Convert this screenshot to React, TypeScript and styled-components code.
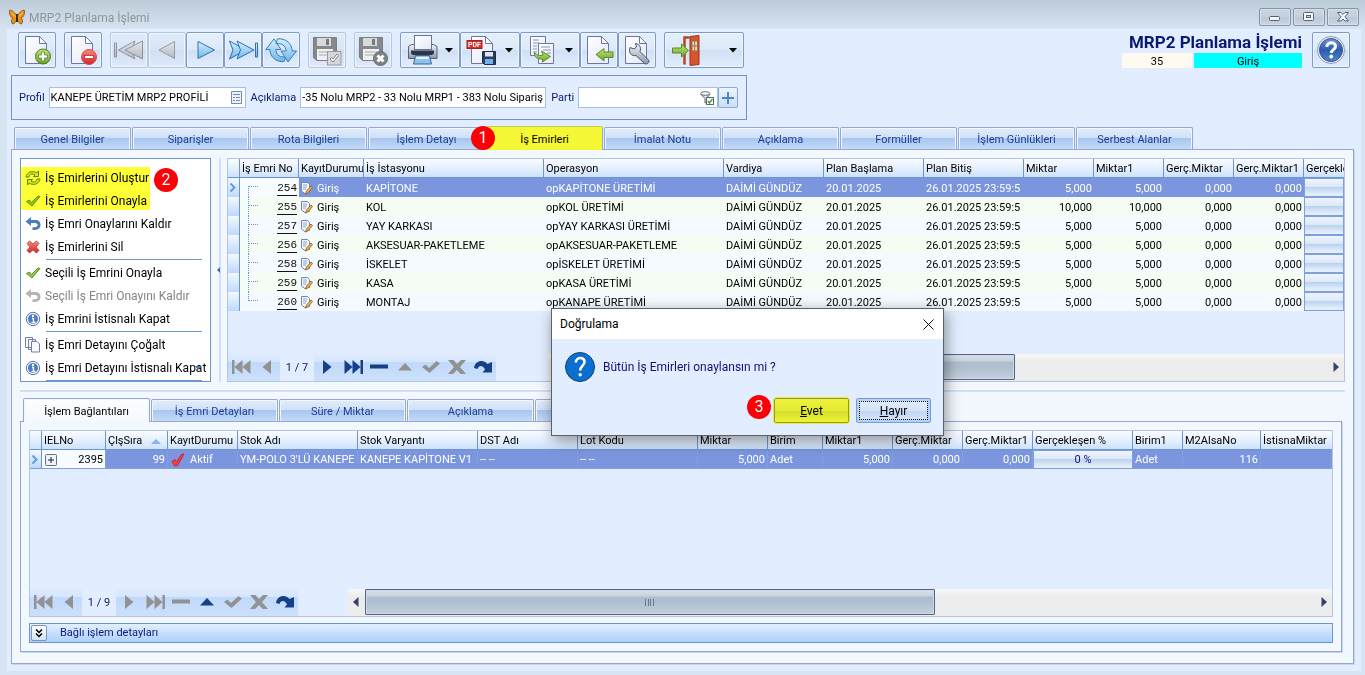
import React from 'react';
import styled, { createGlobalStyle, css } from 'styled-components';

const ui = '"Segoe UI", Roboto, "Noto Sans", sans-serif';
const tahoma = 'Tahoma, Roboto, "Noto Sans", sans-serif';

const Global = createGlobalStyle`
  *, *::before, *::after { box-sizing: border-box; }
  body { margin: 0; background: #d7e4f1; font: 11px/14px ${tahoma}; color: #000; }
  button, input { font: inherit; color: inherit; margin: 0; padding: 0; }
  svg { display: block; flex: none; }
`;

/* ---------- window frame ---------- */

const Window = styled.div`
  display: flex;
  flex-direction: column;
  min-height: 100vh;
  position: relative;
  overflow: hidden;
`;

const TitleBar = styled.header`
  display: flex;
  align-items: center;
  gap: 4px;
  height: 29px;
  padding: 5px 6px 0 9px;
  background: linear-gradient(#bdccd9, #d6e3f0);
  font: 12px/16px ${ui};
  color: #8e959d;
`;

const TitleText = styled.h1`
  flex: 1;
  margin: 0;
  padding-top: 2px;
  font: inherit;
`;

const CaptionButtons = styled.div`
  display: flex;
  gap: 2px;
`;

const CaptionButton = styled.button`
  display: flex;
  align-items: center;
  justify-content: center;
  width: 32px;
  height: 18px;
  border: 1px solid #8794a8;
  border-radius: 2px;
  background: linear-gradient(#cad6e2, #c3d0dd 50%, #b9c7d6 50%, #c9d6e3);
  box-shadow: inset 0 0 0 1px #d5e0ea;
`;

const Client = styled.main`
  flex: 1;
  display: flex;
  flex-direction: column;
  margin: 0 4px 4px 7px;
  padding: 3px 7px 7px 4px;
  background: #e2eeff;
`;

/* ---------- toolbar ---------- */

const Toolbar = styled.div`
  display: flex;
  justify-content: space-between;
  gap: 8px;
`;

const ToolGroups = styled.div`
  display: flex;
  gap: 8px;
  padding-left: 7px;
`;

const ToolGroup = styled.div`
  display: flex;
`;

const ToolButton = styled.button<{ $wide?: 'menu' | 'exit' }>`
  display: flex;
  align-items: center;
  justify-content: ${p => (p.$wide ? 'space-between' : 'center')};
  width: ${p => (p.$wide === 'exit' ? 80 : p.$wide ? 60 : 38)}px;
  height: 36px;
  padding: 0 ${p => (p.$wide ? 6 : 0)}px 0 ${p => (p.$wide ? 5 : 0)}px;
  border: 1px solid #7f9bc9;
  border-radius: 2px;
  background: linear-gradient(#e6f0fb, #dce9f8 50%, #cfe0f5 50%, #e2eefc);
  box-shadow: inset 0 0 0 1px #eef5fd;
  &:disabled {
    border-color: #b4c8e2;
    background: linear-gradient(#e0ebf9, #d8e5f6 50%, #d0dff3 50%, #dfeafa);
  }
`;

const Summary = styled.div`
  display: flex;
  gap: 10px;
  padding-right: 4px;
`;

const SummaryText = styled.div`
  display: flex;
  flex-direction: column;
  align-items: flex-end;
  width: 180px;
`;

const SummaryTitle = styled.h2`
  margin: 0;
  font: bold 17px/21px ${ui};
  color: #0a1a72;
  white-space: nowrap;
`;

const SummaryFields = styled.div`
  display: flex;
  gap: 2px;
`;

const SummaryField = styled.output<{ $accent?: boolean }>`
  width: ${p => (p.$accent ? 108 : 70)}px;
  height: 15px;
  line-height: 17px;
  text-align: center;
  background: ${p => (p.$accent ? '#00ffff' : '#fffaf0')};
`;

/* ---------- profile strip ---------- */

const ProfileStrip = styled.section`
  display: flex;
  align-items: center;
  align-self: flex-start;
  gap: 5px;
  width: 736px;
  max-width: 100%;
  height: 45px;
  margin-top: 7px;
  padding: 0 8px 0 7px;
  border: 1px solid #6b95d3;
  color: #0a1a72;
`;

const Field = styled.label<{ $fill?: boolean }>`
  display: flex;
  align-items: center;
  gap: 4px;
  flex: ${p => (p.$fill ? '1 1 0' : 'none')};
`;

const FieldBox = styled.span<{ $width?: number }>`
  display: flex;
  align-items: center;
  ${p => (p.$width ? `width: ${p.$width}px;` : 'flex: 1;')}
  height: 21px;
  padding-left: 1px;
  border: 1px solid #a9c0e0;
  background: #fff;
  color: #000;
  & > svg { margin-right: 3px; }
`;

const FieldInput = styled.input`
  flex: 1;
  width: 0;
  min-width: 0;
  border: 0;
  outline: 0;
  background: transparent;
`;

const AddButton = styled.button`
  display: flex;
  align-items: center;
  justify-content: center;
  width: 20px;
  height: 21px;
  margin-left: -5px;
  border: 1px solid #8fa9d1;
  border-radius: 2px;
  background: linear-gradient(#edf4fd, #cbddf4);
`;

/* ---------- tabs ---------- */

const TabRow = styled.nav<{ $top?: number }>`
  display: flex;
  align-items: flex-end;
  gap: 1px;
  height: 23px;
  margin: ${p => p.$top ?? 0}px 0 0 3px;
`;

const Tab = styled.button<{ $active?: boolean; $marked?: boolean; $width: number }>`
  flex: 0 1 ${p => p.$width}px;
  height: 22px;
  padding-top: 2px;
  border: 1px solid #93a9d0;
  border-bottom: 0;
  border-radius: 2px 2px 0 0;
  color: #1c3f94;
  background: linear-gradient(#e2edfb, #cfe0f7 46%, #a8c6f0 50%, #c4dbf8);
  box-shadow: inset 1px 1px 0 #eff6ff, inset -1px 0 0 #eff6ff;
  white-space: nowrap;
  ${p =>
    p.$active &&
    css`
      height: 24px;
      margin-bottom: -1px;
      position: relative;
      z-index: 1;
      color: #000;
      background: ${p.$marked ? '#f5f835' : 'linear-gradient(#fdfeff, #f3f8ff)'};
      ${p.$marked && 'box-shadow: none; border-left-color: #f5f835; border-top-color: #c5cb4c;'}
    `}
`;

const Page = styled.section<{ $nested?: boolean }>`
  flex: 1;
  display: flex;
  flex-direction: column;
  ${p => p.$nested && 'margin: 0 3px 3px 0;'}
  border: 1px solid #93a9d0;
  background: #f3f8ff;
  padding: 8px;
  box-shadow: 1px 1px 0 #c7d6ec;
`;

/* ---------- command menu ---------- */

const UpperPane = styled.div`
  display: flex;
  height: 224px;
`;

const Menu = styled.aside`
  flex: none;
  position: relative;
  width: 191px;
  padding: 7px 8px 0 4px;
  border: 1px solid #6b95d3;
  background: #fff;
  overflow: hidden;
`;

const MenuItem = styled.button`
  display: flex;
  align-items: center;
  gap: 4px;
  width: 100%;
  height: 23px;
  border: 0;
  background: none;
  font: 12px/16px ${ui};
  white-space: nowrap;
  &:disabled { color: #848484; }
`;

const MenuRule = styled.hr`
  height: 1px;
  margin: 1px 0 1px 21px;
  border: 0;
  background: #6b95d3;
`;

const Marker = styled.span`
  position: absolute;
  left: 0;
  top: 8px;
  width: 129px;
  height: 43px;
  background: #ffff36;
  mix-blend-mode: multiply;
  pointer-events: none;
`;

const MoreMark = styled.span`
  position: absolute;
  right: 9px;
  bottom: 11px;
  border: 3px solid transparent;
  border-bottom: 0;
  border-top: 4px solid #4a7ebb;
`;

const Badge = styled.span<{ $x: number; $y: number }>`
  position: absolute;
  z-index: 5;
  left: ${p => p.$x}px;
  top: ${p => p.$y}px;
  width: 24px;
  height: 24px;
  border-radius: 50%;
  background: #fb0007;
  color: #fff;
  font: 16px/24px ${ui};
  text-align: center;
`;

const Splitter = styled.div<{ $vertical?: boolean }>`
  flex: none;
  display: flex;
  align-items: center;
  ${p =>
    p.$vertical
      ? 'width: 16px; padding-left: 5px; background: linear-gradient(90deg, transparent 8px, #cfe2fb 8px, #cfe2fb 10px, transparent 10px);'
      : 'height: 16px; background: linear-gradient(transparent 7px, #fff 7px, #fff 8px, #bfdaff 8px, #d5e6fd 10px, transparent 10px);'}
`;

/* ---------- data grids ---------- */

const GridPanel = styled.div`
  flex: 1;
  min-width: 0;
  display: flex;
  flex-direction: column;
  border: 1px solid #b1c6e2;
  background: #e2eeff;
`;

const GridBody = styled.div`
  flex: 1;
  overflow: hidden;
`;

const Table = styled.table`
  table-layout: fixed;
  width: 100%;
  border-collapse: separate;
  border-spacing: 0;
`;

const Head = styled.th`
  height: 19px;
  padding: 2px 0 0 2px;
  overflow: hidden;
  white-space: nowrap;
  text-align: left;
  font-weight: normal;
  border-right: 1px solid #6b95d3;
  border-bottom: 1px solid #6b95d3;
  background: linear-gradient(#f9fcff, #e3effe 55%, #cde1fb);
  &:last-child { border-right: 0; }
`;

const SortHead = styled.span`
  display: flex;
  align-items: center;
  justify-content: space-between;
  padding-right: 6px;
`;

const Row = styled.tr<{ $selected?: boolean; $lined?: boolean }>`
  background: #f4faff;
  &:nth-child(even) { background: #f4fcf4; }
  ${p => p.$selected && 'background: #7b96de; color: #fff;'}
  ${p => p.$lined && '& > td { border-right: 1px solid #7fa0dc; border-bottom: 1px solid #7fa0dc; }'}
`;

const Cell = styled.td<{ $right?: boolean; $plain?: boolean }>`
  height: 19px;
  padding: 2px ${p => (p.$right ? 2 : 0)}px 0 2px;
  line-height: 16px;
  overflow: hidden;
  white-space: nowrap;
  text-align: ${p => (p.$right ? 'right' : 'left')};
  ${p => p.$plain && 'background: #f8fcff; color: #000;'}
`;

const IndicatorCell = styled(Cell)`
  && { border-right: 1px solid #6b95d3; }
  padding: 0 0 0 1px;
  background: linear-gradient(#f3f9ff, #bfd9fb);
`;

const OrderCell = styled(Cell)`
  padding: 0 2px;
`;

const Inline = styled.span<{ $between?: boolean }>`
  display: flex;
  align-items: center;
  gap: 4px;
  ${p => p.$between && 'justify-content: space-between;'}
`;

const OrderNo = styled.a`
  padding-top: 2px;
  font: 11px/13px "Liberation Mono", monospace;
  color: #111;
  text-decoration: none;
  border-bottom: 1px solid #111;
`;

const ProgressCell = styled.td`
  height: 19px;
  padding: 0;
  text-align: center;
  color: #10107a;
  border: 1px solid #7fa0dc;
  background: linear-gradient(#eef4fd, #dde9f8 45%, #bcd3f0 50%, #e3eefb 90%);
`;

const GridFooter = styled.div`
  display: flex;
  align-items: stretch;
  justify-content: space-between;
  height: 27px;
`;

const NavBar = styled.div`
  flex: none;
  display: flex;
`;

const NavStrip = styled.div`
  display: flex;
  background: linear-gradient(#deebfd, #d5e6fd 8px, #c0d9fb 8px, #cce0fb);
`;

const NavButton = styled.button`
  display: flex;
  align-items: center;
  justify-content: center;
  width: 26px;
  padding-bottom: 1px;
  border: 0;
  background: none;
  color: #163f87;
  &:disabled { color: #929292; }
`;

const NavCount = styled.span`
  width: 34px;
  line-height: 28px;
  text-align: center;
  color: #0a1a72;
`;

const ScrollBar = styled.div<{ $width: string }>`
  display: flex;
  align-items: flex-start;
  width: ${p => p.$width};
  background: linear-gradient(#f7f7f7, #ececec 30%, #ededed);
`;

const ScrollArrow = styled.button`
  display: flex;
  align-items: center;
  justify-content: center;
  width: 17px;
  height: 26px;
  border: 0;
  background: none;
`;

const ScrollTrack = styled.div`
  flex: 1;
  height: 26px;
`;

const ScrollThumb = styled.div<{ $size: string }>`
  display: flex;
  align-items: center;
  justify-content: center;
  width: ${p => p.$size};
  height: 26px;
  border: 1px solid #54658f;
  border-radius: 1px;
  background: linear-gradient(#dbe2ea, #c6d1dd 26%, #adbdce 30%, #b3c1d1 60%, #c5d0dc);
  box-shadow: inset 0 0 0 1px #d0d9e3;
`;

const DetailBar = styled.div`
  display: flex;
  align-items: center;
  gap: 13px;
  height: 20px;
  margin-top: 6px;
  padding: 0 1px;
  border: 1px solid #6b95d3;
  background: linear-gradient(#e3effe, #acd0fc);
  line-height: 16px;
  color: #0a1a72;
`;

const ExpandButton = styled.button`
  display: flex;
  align-items: center;
  justify-content: center;
  width: 16px;
  height: 16px;
  border: 1px solid #7b93bd;
  border-radius: 2px;
  background: linear-gradient(#fff, #d3e3f8);
`;

/* ---------- dialog ---------- */

const Dialog = styled.section`
  position: absolute;
  z-index: 4;
  left: 551px;
  top: 308px;
  width: 393px;
  border: 1px solid #5c6169;
  background: #e2eeff;
  box-shadow: 2px 4px 14px rgba(0, 0, 0, 0.42);
`;

const DialogTitle = styled.header`
  display: flex;
  align-items: center;
  justify-content: space-between;
  height: 30px;
  padding: 0 9px 0 8px;
  background: #fff;
  font: 12px/16px ${ui};
`;

const DialogClose = styled.button`
  display: flex;
  justify-content: flex-end;
  width: 14px;
  border: 0;
  background: none;
`;

const DialogBody = styled.div`
  display: flex;
  align-items: center;
  gap: 8px;
  height: 56px;
  padding: 0 13px;
  font: 12px/16px ${ui};
  color: #10107a;
`;

const DialogButtons = styled.div`
  display: flex;
  justify-content: flex-end;
  gap: 7px;
  height: 40px;
  padding: 3px 12px 12px;
`;

const DialogButton = styled.button<{ $marked?: boolean }>`
  width: 75px;
  border: 1px solid ${p => (p.$marked ? '#8f9b3a' : '#7c9bcb')};
  border-radius: 2px;
  font: 12px/16px ${ui};
  background: ${p =>
    p.$marked
      ? 'linear-gradient(#eef23a, #e6ea33 50%, #d2d92c 50%, #eef535)'
      : 'linear-gradient(#e4effc, #d3e3f8 50%, #bed5f3 50%, #d8e8fc)'};
  ${p =>
    p.$marked
      ? 'outline: 1px solid #e8ec30;'
      : 'outline: 1px dotted #111; outline-offset: -4px; box-shadow: inset 0 0 0 2px #b3d2f7;'}
`;

/* ---------- drawings ---------- */

const SharedGradients = () => (
  <svg width="0" height="0" style={{ position: 'absolute' }} aria-hidden="true">
    <defs>
      <linearGradient id="paper" x1="0" y1="0" x2="1" y2="1"><stop offset="0" stopColor="#fff" /><stop offset="1" stopColor="#e4e9f6" /></linearGradient>
      <linearGradient id="sky" x1="0" y1="0" x2="0" y2="1"><stop offset="0" stopColor="#d9f0fd" /><stop offset="1" stopColor="#6db6ea" /></linearGradient>
      <linearGradient id="silver" x1="0" y1="0" x2="0" y2="1"><stop offset="0" stopColor="#e6e8eb" /><stop offset="1" stopColor="#b4b9bf" /></linearGradient>
      <linearGradient id="leaf" x1="0" y1="0" x2="0" y2="1"><stop offset="0" stopColor="#c0e67c" /><stop offset="1" stopColor="#6ea32b" /></linearGradient>
      <linearGradient id="red" x1="0" y1="0" x2="0" y2="1"><stop offset="0" stopColor="#f78a84" /><stop offset="1" stopColor="#d2232a" /></linearGradient>
      <linearGradient id="steel" x1="0" y1="0" x2="0" y2="1"><stop offset="0" stopColor="#f2f3f6" /><stop offset="1" stopColor="#8d97ab" /></linearGradient>
      <linearGradient id="royal" x1="0" y1="0" x2="0" y2="1"><stop offset="0" stopColor="#6b95d8" /><stop offset=".5" stopColor="#2d5cae" /><stop offset="1" stopColor="#4f86d6" /></linearGradient>
    </defs>
  </svg>
);

const Icon = ({ size = 32, children }: { size?: number; children: React.ReactNode }) => (
  <svg width={size} height={size} viewBox={`0 0 ${size} ${size}`} aria-hidden="true">{children}</svg>
);

const Sheet = () => (
  <>
    <path d="M4.500 2.500h14l7 7v20h-21z" fill="url(#paper)" stroke="#6c78a3" />
    <path d="M18.500 2.500v7h7z" fill="#fff" stroke="#6c78a3" strokeLinejoin="round" />
  </>
);

const NewIcon = () => (
  <Icon><Sheet /><circle cx="22" cy="22.500" r="7.500" fill="url(#leaf)" stroke="#4d7a1d" /><path d="M20.500 18h3v3h3v3h-3v3h-3v-3h-3v-3h3z" fill="#fff" stroke="#4d7a1d" strokeWidth=".7" /></Icon>
);
const DeleteIcon = () => (
  <Icon><Sheet /><circle cx="22" cy="23" r="7.500" fill="url(#red)" stroke="#e04a4d" /><rect x="17.500" y="21.500" width="9" height="3" fill="#fff" stroke="#b61c20" strokeWidth=".7" /></Icon>
);

const FirstIcon = () => (
  <Icon><g fill="url(#silver)" stroke="#8d9299"><path d="M1.500 9v14h2V9z" /><path d="M5.500 16L22 7l-3.500 9 3.500 9z" /><path d="M12 16L29.500 7v18z" /></g></Icon>
);
const PriorIcon = () => <Icon><path d="M8 16L23.500 7.500v17z" fill="url(#silver)" stroke="#959aa1" /></Icon>;
const NextIcon = () => <Icon><path d="M25.500 16L9 7.500v17z" fill="url(#sky)" stroke="#2f6fb5" /></Icon>;
const LastIcon = () => (
  <Icon><g fill="url(#sky)" stroke="#2f6fb5"><path d="M30.500 9v14h-2V9z" /><path d="M2.500 7L19 16 2.500 25 6 16z" /><path d="M10 7l17 9-17 9 3.500-9z" /></g></Icon>
);
const RefreshIcon = () => (
  <Icon>
    <g fill="url(#sky)" stroke="#3a7cbf" strokeLinejoin="round">
      <path d="M9 5L.8 15.500h4c.6 8 6.200 12.500 14.200 12.200l2-5c-5.500 1.200-9.800-1.700-10.200-7.200h5.200z" />
      <path d="M23 28l8.500-11h-4.300C26.700 9.300 21 4.300 12.500 4.800l-1.500 5c5.500-1 9.700 1.700 10.200 7.200H16z" />
    </g>
  </Icon>
);

const Disk = () => (
  <>
    <path d="M2.500 3.500h23v23h-20l-3-3z" fill="#85888c" stroke="#7a7d81" />
    <rect x="6" y="4" width="14" height="8" fill="#d8dadc" /><rect x="15" y="5" width="3" height="6" fill="#77797d" />
    <rect x="6" y="15" width="16" height="11" fill="#eff0f1" /><path d="M8 18h12M8 21h12" stroke="#a7a9ac" />
  </>
);
const SaveIcon = () => (
  <Icon><Disk /><rect x="16.500" y="17.500" width="13.500" height="13.500" fill="#d3d6da" stroke="#96999e" /><path d="M19 25l3 3 5.500-6.500-1.500-1.500L22 25l-1.500-1.500z" fill="#fff" stroke="#7d8085" /></Icon>
);
const CancelSaveIcon = () => (
  <Icon><Disk /><circle cx="23.500" cy="24.500" r="7" fill="#7d8085" stroke="#686b6f" /><path d="M20.500 21.500l6 6m0-6l-6 6" stroke="#fff" strokeWidth="3" /></Icon>
);

const PrinterIcon = () => (
  <Icon>
    <path d="M2.500 12.500l3-2h3v5h17v-5h2l3.500 2v12h-28.500z" fill="url(#steel)" stroke="#566079" />
    <rect x="8.500" y="1.500" width="17" height="14" fill="url(#paper)" stroke="#6c7590" />
    <path d="M5 16.500h23v3l-2 1.500H7l-2-1.500z" fill="#2d3547" />
    <path d="M9.500 21.500h14l2 8.500H7.500z" fill="#8cc2f0" stroke="#47658f" /><path d="M10.500 23h12l.5 2H10z" fill="#e4f3ff" />
  </Icon>
);
const PdfIcon = () => (
  <Icon>
    <g transform="translate(1 0)"><Sheet /></g>
    <rect x="1" y="6.500" width="15" height="8" fill="#cf2f2f" stroke="#b01d1d" />
    <text x="2" y="13" fontSize="7" fontWeight="bold" fill="#fff" fontFamily="Roboto, sans-serif">PDF</text>
    <path d="M16.500 17.500h13v13h-11l-2-2z" fill="#2b3c5e" stroke="#1e2b47" /><rect x="19" y="18" width="8" height="4.500" fill="#dfe6f2" /><rect x="19" y="25" width="8" height="5" fill="#6fb2ee" />
  </Icon>
);
const TransferIcon = () => (
  <Icon>
    <path d="M4.500 2.500h15v19h-15z" fill="url(#paper)" stroke="#6c78a3" />
    <path d="M7 6h6M7 9h6M7 12h4M7 15h4M7 18h4" stroke="#8a94b8" />
    <path d="M12.500 9.500h15v20h-15z" fill="url(#paper)" stroke="#6c78a3" />
    <path d="M15 13h9M17 16h8M21 19h4" stroke="#8a94b8" />
    <path d="M8.500 18.500c2 3 6 3.500 8.500 2.500l-1.500-4 9 5.500-8 5.500v-3c-5 .5-8.500-2-8-6.500z" fill="url(#leaf)" stroke="#5b8a25" />
  </Icon>
);
const ImportIcon = () => (
  <Icon><Sheet /><path d="M13 20.500l8-6v3.500h9v5.500h-9V27z" fill="url(#leaf)" stroke="#5b8a25" /></Icon>
);
const WrenchIcon = () => (
  <Icon><Sheet />
    <path d="M9 13.500l4 1.500 2.500-2-1-3.500c4 .5 6 4 4.500 8l8.500 8.500c1.500 2.500-1.500 5-4 3.500L15 21.500c-4 1-8-2.500-6-8z" fill="url(#steel)" stroke="#4a5468" />
  </Icon>
);
const ExitIcon = () => (
  <Icon>
    <path d="M14.500 30.500v-27h5" stroke="#b54425" strokeWidth="2.500" fill="none" />
    <path d="M20 2.500l9-1v29L20 31.500z" fill="#d8532f" stroke="#9c3617" />
    <path d="M22 7h5.500v10H22z" fill="#e8dcb8" stroke="#a36b4a" /><path d="M24.700 7v10M22 12h5.500" stroke="#a36b4a" />
    <path d="M2.500 14h9v-4l7 6.500-7 6.500v-4h-9z" fill="url(#leaf)" stroke="#5b8a25" />
  </Icon>
);
const HelpIcon = () => (
  <Icon><circle cx="16" cy="16" r="13.500" fill="#f4f7fb" stroke="#8c97b5" /><circle cx="16" cy="16" r="11.500" fill="url(#royal)" stroke="#3c4f8c" />
    <path d="M11.800 12.800c.4-5.500 9-5.500 8.700-.2-.2 3-4 3-4.200 6.200" fill="none" stroke="#fff" strokeWidth="3" /><circle cx="16.200" cy="22.500" r="1.900" fill="#fff" />
  </Icon>
);
const Caret = () => <svg width="8" height="5" viewBox="0 0 8 5"><path d="M0 0h8L4 4.500z" fill="#000" /></svg>;

const Butterfly = () => (
  <Icon size={16}>
    <path d="M8 7C5 2 1 .5.500 1.500 0 5 2 9 4 9.200 2 10 2 13 3.500 15c2 0 4-3 4.500-5 .5 2 2.500 5 4.500 5 1.500-2 1.500-5-.5-5.800C14 9 16 5 15.500 1.500 15 .5 11 2 8 7z" fill="#ea901a" stroke="#7a4a18" strokeWidth=".8" />
    <path d="M8 5v8" stroke="#2d2118" strokeWidth="1.800" /><path d="M2.500 3.500l4 4.500M13.500 3.500L9.500 8" stroke="#ffb52e" strokeWidth="1.500" />
  </Icon>
);

const SyncIcon = () => (
  <Icon size={16}><g fill="#d5e8b8" stroke="#5b8a35" strokeWidth="1"><path d="M1 7C1.500 2 8 0 11.800 3L13.500 1v5.500H8.500L10 5C7.500 3 4.500 4 4 7z" /><path d="M15 9c-.5 5-7 7-10.800 4L2.500 15V9.500h5L6 11c2.500 2 5.500 1 6-2z" /></g></Icon>
);
const TickIcon = ({ red }: { red?: boolean }) => (
  <Icon size={16}><path d={red ? 'M2 9.500l3-2 1.500 2.500L11.500 2.500l2.500-.5L7.500 13.500 4.500 14z' : 'M1.500 8.500l3-1.500 2 2.500L13 3l2 .5L7 13z'} fill={red ? '#ee4046' : '#94c551'} stroke={red ? '#c9252c' : '#5f9226'} strokeLinejoin="round" /></Icon>
);
const UndoIcon = ({ color }: { color: string }) => (
  <Icon size={16}><path d="M.5 5.500L6 1v3h4.500c3 0 5 2 5 4.800 0 3-2 5.200-5.500 5.200H7.500v-2.800H10c3.500 0 3.500-4.200 0-4.200H6v3z" fill={color} /></Icon>
);
const CrossIcon = () => (
  <Icon size={16}><path d="M4.500 2L8 5l3.500-3L14 4.500 11 8l3 3.500-2.500 2.500L8 11l-3.500 3L2 11.500 5 8 2 4.500z" fill="url(#red)" stroke="#c9504d" /></Icon>
);
const InfoIcon = () => (
  <Icon size={16}><circle cx="8" cy="8" r="6.700" fill="#eef3fb" stroke="#6077a8" /><circle cx="8" cy="8" r="5" fill="#4b7bc6" /><path d="M7 7.500h1.500V12M6.500 11.500h4" stroke="#fff" strokeWidth="1.300" fill="none" /><circle cx="8" cy="5" r="1.200" fill="#fff" /></Icon>
);
const CopiesIcon = () => (
  <Icon size={16}><g fill="#f7f9fd" stroke="#7181a9"><path d="M.5.500h7v10h-7zM3.500 2.500h7v10h-7z" /><path d="M6.500 4.500h5.500l2.500 2.500v8h-8z" /></g></Icon>
);
const EntryIcon = () => (
  <svg width="12" height="13" viewBox="0 0 12 13" aria-hidden="true"><path d="M.5.500h6l2 2v8h-3l-1 1.500-4-3z" fill="#f3f6fd" stroke="#6f84b5" /><path d="M2 3h4M2 5h4M2 7h3" stroke="#8fa2cc" /><path d="M4.500 12l1-3 4.500-5 1.500 1.500L7 11z" fill="#f3b04b" stroke="#8b5b1d" strokeWidth=".8" /></svg>
);
const FormIcon = () => (
  <svg width="11" height="13" viewBox="0 0 11 13" aria-hidden="true"><path d="M.5.500h10v12h-10z" fill="#eef2fb" stroke="#7388b8" /><path d="M2 3.500h7M2 6.500h2m1 0h4M2 9.500h2m1 0h4" stroke="#7388b8" /></svg>
);
const FilterIcon = () => (
  <svg width="14" height="14" viewBox="0 0 14 14" aria-hidden="true"><path d="M.7 3L5 7.500V12l2-1V7L10 3z" fill="#dfe3ea" stroke="#5c6678" /><ellipse cx="5.300" cy="2.500" rx="4.600" ry="1.800" fill="#fff" stroke="#5c6678" /><rect x="6.500" y="6.500" width="7" height="7" fill="#fff" stroke="#5c6678" /><path d="M8 10l1.500 2L12.500 8" fill="none" stroke="#4da32e" strokeWidth="1.500" /></svg>
);

type BranchKind = 'first' | 'middle' | 'last';
const Branch = ({ kind }: { kind: BranchKind }) => (
  <svg width="18" height="19" viewBox="0 0 18 19" aria-hidden="true">
    <path d={`M6.500 ${kind === 'first' ? 8 : 0}V${kind === 'last' ? 9 : 19}M7 8.500h9`} stroke="#5f93d8" strokeDasharray="1 1" fill="none" />
  </svg>
);
const RowPointer = () => <svg width="8" height="9" viewBox="0 0 8 9"><path d="M1.500.500l4 4-4 4" fill="none" stroke="#5c9ce8" strokeWidth="2" /></svg>;

const navShapes: Record<string, React.ReactNode> = {
  first: <path d="M0 1h2.500v14H0zM10.500 1v14L2.500 8zM18.500 1v14l-8-7z" />,
  prior: <path d="M13 1v14L4.500 8z" />,
  next: <path d="M5 1v14l8.500-7z" />,
  last: <path d="M19 1h-2.500v14H19zM8.500 1v14l8-7zM.5 1v14l8-7z" />,
  remove: <path d="M0 5.500h18v4H0z" />,
  edit: <path d="M2 11.500h14L9 4z" />,
  post: <path d="M0 8l3.500-2.500L7 9l7.500-7L18 4.500 7.500 14z" />,
  cancel: <path d="M0 1h5.500L9 5l4-4h5l-6 7 6 7h-5.500L9 11l-4 4H0l6-7z" />,
  refresh: <path d="M0 9C1 2 9-.5 13.500 5L18 3v10.500H8.500l2.500-3C9 5.500 4.500 6 3.500 10z" />,
};

interface NavProps { count: string; enabled: string[] }
const Navigator = ({ count, enabled }: NavProps) => {
  const button = (name: string) => (
    <NavButton key={name} aria-label={name} disabled={!enabled.includes(name)}>
      <svg width="19" height="16" viewBox="0 0 19 16" fill="currentColor" aria-hidden="true">{navShapes[name]}</svg>
    </NavButton>
  );
  return (
    <NavBar>
      <NavStrip>{['first', 'prior'].map(button)}</NavStrip>
      <NavCount>{count}</NavCount>
      <NavStrip>{['next', 'last', 'remove', 'edit', 'post', 'cancel', 'refresh'].map(button)}</NavStrip>
    </NavBar>
  );
};

const Scroller = ({ width, thumb }: { width: string; thumb: string }) => (
  <ScrollBar $width={width}>
    <ScrollArrow aria-label="Sola kaydır"><svg width="6" height="10" viewBox="0 0 6 10"><path d="M5.500 0v10L0 5z" fill="#33436c" /></svg></ScrollArrow>
    <ScrollTrack>
      <ScrollThumb $size={thumb}><svg width="9" height="7" viewBox="0 0 9 7"><path d="M.5 0v7M3.500 0v7M5.500 0v7M8.500 0v7" stroke="#69778f" /></svg></ScrollThumb>
    </ScrollTrack>
    <ScrollArrow aria-label="Sağa kaydır"><svg width="6" height="10" viewBox="0 0 6 10"><path d="M.5 0v10L6 5z" fill="#33436c" /></svg></ScrollArrow>
  </ScrollBar>
);

/* ---------- data ---------- */

const mainTabs = ['Genel Bilgiler', 'Siparişler', 'Rota Bilgileri', 'İşlem Detayı', 'İş Emirleri', 'İmalat Notu', 'Açıklama', 'Formüller', 'İşlem Günlükleri', 'Serbest Alanlar'];
const detailTabs = ['İşlem Bağlantıları', 'İş Emri Detayları', 'Süre / Miktar', 'Açıklama', 'Formüller'];

const commands: ({ icon: React.ReactNode; text: string; off?: boolean } | null)[] = [
  { icon: <SyncIcon />, text: 'İş Emirlerini Oluştur' },
  { icon: <TickIcon />, text: 'İş Emirlerini Onayla' },
  { icon: <UndoIcon color="#4a7ebb" />, text: 'İş Emri Onaylarını Kaldır' },
  { icon: <CrossIcon />, text: 'İş Emirlerini Sil' },
  null,
  { icon: <TickIcon />, text: 'Seçili İş Emrini Onayla' },
  { icon: <UndoIcon color="#b4b4b4" />, text: 'Seçili İş Emri Onayını Kaldır', off: true },
  { icon: <InfoIcon />, text: 'İş Emrini İstisnalı Kapat' },
  null,
  { icon: <CopiesIcon />, text: 'İş Emri Detayını Çoğalt' },
  { icon: <InfoIcon />, text: 'İş Emri Detayını İstisnalı Kapat' },
  null,
];

const orderColumns: [string, number][] = [
  ['', 12], ['İş Emri No', 59], ['KayıtDurumu', 65], ['İş İstasyonu', 180], ['Operasyon', 180], ['Vardiya', 100], ['Plan Başlama', 100],
  ['Plan Bitiş', 100], ['Miktar', 70], ['Miktar1', 70], ['Gerç.Miktar', 70], ['Gerç.Miktar1', 70], ['Gerçekle', 0],
];
const orders: [string, string, string, string][] = [
  ['254', 'KAPİTONE', 'opKAPİTONE ÜRETİMİ', '5,000'],
  ['255', 'KOL', 'opKOL ÜRETİMİ', '10,000'],
  ['257', 'YAY KARKASI', 'opYAY KARKASI ÜRETİMİ', '5,000'],
  ['256', 'AKSESUAR-PAKETLEME', 'opAKSESUAR-PAKETLEME', '5,000'],
  ['258', 'İSKELET', 'opİSKELET ÜRETİMİ', '5,000'],
  ['259', 'KASA', 'opKASA ÜRETİMİ', '5,000'],
  ['260', 'MONTAJ', 'opKANAPE ÜRETİMİ', '5,000'],
];

const linkColumns: [string, number][] = [
  ['', 12], ['IELNo', 64], ['ÇlşSıra', 62], ['KayıtDurumu', 70], ['Stok Adı', 120], ['Stok Varyantı', 120], ['DST Adı', 100], ['Lot Kodu', 120],
  ['Miktar', 70], ['Birim', 55], ['Miktar1', 70], ['Gerç.Miktar', 70], ['Gerç.Miktar1', 70], ['Gerçekleşen %', 100], ['Birim1', 50], ['M2AlsaNo', 78], ['İstisnaMiktar', 0],
];

const Columns = ({ columns }: { columns: [string, number][] }) => (
  <>
    <colgroup>{columns.map(([name, width]) => <col key={name} width={width || undefined} />)}</colgroup>
    <thead>
      <tr>
        {columns.map(([name]) => (
          <Head key={name}>
            {name === 'ÇlşSıra' ? (
              <SortHead>{name}<svg width="10" height="5" viewBox="0 0 10 5"><path d="M5 0l5 5H0z" fill="#86b5f0" /></svg></SortHead>
            ) : name}
          </Head>
        ))}
      </tr>
    </thead>
  </>
);

export default function App() {
  return (
    <Window>
      <Global />
      <SharedGradients />
      <TitleBar>
        <Butterfly />
        <TitleText>MRP2 Planlama İşlemi</TitleText>
        <CaptionButtons>
          <CaptionButton aria-label="Simge durumuna küçült"><svg width="12" height="12" viewBox="0 0 12 12"><rect x=".5" y="5.500" width="10" height="4" rx="1" fill="#f4f6f8" stroke="#59616f" /></svg></CaptionButton>
          <CaptionButton aria-label="Ekranı kapla"><svg width="12" height="10" viewBox="0 0 12 10"><rect x=".5" y=".5" width="10" height="8" rx="1" fill="#f4f6f8" stroke="#59616f" /><rect x="3.500" y="3.500" width="4" height="2" fill="#cdd6e0" stroke="#59616f" /></svg></CaptionButton>
          <CaptionButton aria-label="Kapat"><svg width="12" height="10" viewBox="0 0 12 10"><path d="M.5.500h3.500l2 2 2-2h3.500L8 4.800l3.500 4.200H8L6 7 4 9H.5L4 4.800z" fill="#f4f6f8" stroke="#59616f" /></svg></CaptionButton>
        </CaptionButtons>
      </TitleBar>

      <Client>
        <Toolbar>
          <ToolGroups>
            <ToolGroup><ToolButton aria-label="Yeni"><NewIcon /></ToolButton></ToolGroup>
            <ToolGroup><ToolButton aria-label="Sil"><DeleteIcon /></ToolButton></ToolGroup>
            <ToolGroup>
              <ToolButton disabled aria-label="İlk"><FirstIcon /></ToolButton>
              <ToolButton disabled aria-label="Önceki"><PriorIcon /></ToolButton>
              <ToolButton aria-label="Sonraki"><NextIcon /></ToolButton>
              <ToolButton aria-label="Son"><LastIcon /></ToolButton>
              <ToolButton aria-label="Yenile"><RefreshIcon /></ToolButton>
            </ToolGroup>
            <ToolGroup><ToolButton disabled aria-label="Kaydet"><SaveIcon /></ToolButton></ToolGroup>
            <ToolGroup><ToolButton disabled aria-label="Vazgeç"><CancelSaveIcon /></ToolButton></ToolGroup>
            <ToolGroup>
              <ToolButton $wide="menu" aria-label="Yazdır"><PrinterIcon /><Caret /></ToolButton>
              <ToolButton $wide="menu" aria-label="PDF kaydet"><PdfIcon /><Caret /></ToolButton>
              <ToolButton $wide="menu" aria-label="Aktar"><TransferIcon /><Caret /></ToolButton>
              <ToolButton aria-label="İçeri al"><ImportIcon /></ToolButton>
              <ToolButton aria-label="Ayarlar"><WrenchIcon /></ToolButton>
            </ToolGroup>
            <ToolGroup><ToolButton $wide="exit" aria-label="Çıkış"><ExitIcon /><Caret /></ToolButton></ToolGroup>
          </ToolGroups>
          <Summary>
            <SummaryText>
              <SummaryTitle>MRP2 Planlama İşlemi</SummaryTitle>
              <SummaryFields><SummaryField>35</SummaryField><SummaryField $accent>Giriş</SummaryField></SummaryFields>
            </SummaryText>
            <ToolButton aria-label="Yardım"><HelpIcon /></ToolButton>
          </Summary>
        </Toolbar>

        <ProfileStrip>
          <Field>Profil<FieldBox $width={197}><FieldInput defaultValue="KANEPE ÜRETİM MRP2 PROFİLİ" /><FormIcon /></FieldBox></Field>
          <Field>Açıklama<FieldBox $width={246}><FieldInput defaultValue="-35 Nolu MRP2 - 33 Nolu MRP1 - 383 Nolu Sipariş" /></FieldBox></Field>
          <Field $fill>Parti<FieldBox><FieldInput /><FilterIcon /></FieldBox></Field>
          <AddButton aria-label="Parti ekle"><svg width="12" height="12" viewBox="0 0 12 12"><path d="M6 0v12M0 6h12" stroke="#4a88c8" strokeWidth="2" /></svg></AddButton>
        </ProfileStrip>

        <TabRow $top={6}>
          {mainTabs.map((name, i) => <Tab key={name} $width={117} $active={i === 4} $marked={i === 4}>{name}</Tab>)}
        </TabRow>

        <Page>
          <UpperPane>
            <Menu>
              {commands.map((c, i) => c ? <MenuItem key={c.text} disabled={c.off}>{c.icon}{c.text}</MenuItem> : <MenuRule key={i} />)}
              <Marker />
              <MoreMark />
            </Menu>
            <Splitter $vertical><svg width="5" height="6" viewBox="0 0 5 6"><path d="M4 0v6L1 3z" fill="#3b6fb5" /></svg></Splitter>
            <GridPanel>
              <GridBody>
                <Table>
                  <Columns columns={orderColumns} />
                  <tbody>
                    {orders.map(([no, station, operation, amount], i) => (
                      <Row key={no} $selected={i === 0}>
                        <IndicatorCell>{i === 0 && <RowPointer />}</IndicatorCell>
                        <OrderCell $plain={i === 0}><Inline $between><Branch kind={i === 0 ? 'first' : i === 6 ? 'last' : 'middle'} /><OrderNo href="#">{no}</OrderNo></Inline></OrderCell>
                        <Cell><Inline><EntryIcon />Giriş</Inline></Cell>
                        <Cell>{station}</Cell>
                        <Cell>{operation}</Cell>
                        <Cell>DAİMİ GÜNDÜZ</Cell>
                        <Cell>20.01.2025</Cell>
                        <Cell>26.01.2025 23:59:5</Cell>
                        <Cell $right>{amount}</Cell>
                        <Cell $right>{amount}</Cell>
                        <Cell $right>0,000</Cell>
                        <Cell $right>0,000</Cell>
                        <ProgressCell />
                      </Row>
                    ))}
                  </tbody>
                </Table>
              </GridBody>
              <GridFooter>
                <Navigator count="1 / 7" enabled={['next', 'last', 'remove', 'refresh']} />
                <Scroller width="71.3%" thumb="59%" />
              </GridFooter>
            </GridPanel>
          </UpperPane>

          <Splitter />

          <TabRow>
            {detailTabs.map((name, i) => <Tab key={name} $width={127} $active={i === 0}>{name}</Tab>)}
          </TabRow>

          <Page $nested>
            <GridPanel>
              <GridBody>
                <Table>
                  <Columns columns={linkColumns} />
                  <tbody>
                    <Row $selected $lined>
                      <IndicatorCell><RowPointer /></IndicatorCell>
                      <Cell $plain $right>
                        <Inline $between>
                          <svg width="14" height="13" viewBox="0 0 14 13"><rect x="1.500" y=".5" width="11" height="11" rx="1" fill="#eef3fa" stroke="#5d6f92" /><path d="M4 6h6M7 3v6" stroke="#222" /></svg>
                          2395
                        </Inline>
                      </Cell>
                      <Cell $right>99</Cell>
                      <Cell><Inline><TickIcon red />Aktif</Inline></Cell>
                      <Cell>YM-POLO 3'LÜ KANEPE K</Cell>
                      <Cell>KANEPE KAPİTONE V1</Cell>
                      <Cell>-- --</Cell>
                      <Cell>-- --</Cell>
                      <Cell $right>5,000</Cell>
                      <Cell>Adet</Cell>
                      <Cell $right>5,000</Cell>
                      <Cell $right>0,000</Cell>
                      <Cell $right>0,000</Cell>
                      <ProgressCell>0 %</ProgressCell>
                      <Cell>Adet</Cell>
                      <Cell $right>116</Cell>
                      <Cell />
                    </Row>
                  </tbody>
                </Table>
              </GridBody>
              <GridFooter>
                <Navigator count="1 / 9" enabled={['edit', 'refresh']} />
                <Scroller width="75.6%" thumb="60%" />
              </GridFooter>
            </GridPanel>
            <DetailBar>
              <ExpandButton aria-label="Genişlet"><svg width="8" height="9" viewBox="0 0 8 9"><path d="M1 .5l3 3 3-3M1 4.500l3 3 3-3" fill="none" stroke="#000" strokeWidth="1.500" /></svg></ExpandButton>
              Bağlı işlem detayları
            </DetailBar>
          </Page>
        </Page>
      </Client>

      <Badge $x={471} $y={126}>1</Badge>
      <Badge $x={154} $y={168}>2</Badge>

      <Dialog role="dialog" aria-label="Doğrulama">
        <DialogTitle>
          Doğrulama
          <DialogClose aria-label="Kapat"><svg width="11" height="11" viewBox="0 0 11 11"><path d="M.5.500l10 10m0-10l-10 10" stroke="#111" /></svg></DialogClose>
        </DialogTitle>
        <DialogBody>
          <svg width="30" height="30" viewBox="0 0 30 30" aria-hidden="true"><circle cx="15" cy="15" r="14.500" fill="#0a6fce" stroke="#14446f" /><path d="M10.800 10.500c.3-6 9-5.800 8.700-.3-.2 3.300-4.200 3.800-4.300 8.300" fill="none" stroke="#fff" strokeWidth="2.600" /><circle cx="15.200" cy="22.800" r="1.700" fill="#fff" /></svg>
          Bütün İş Emirleri onaylansın mi ?
        </DialogBody>
        <DialogButtons>
          <DialogButton $marked><u>E</u>vet</DialogButton>
          <DialogButton><u>H</u>ayır</DialogButton>
        </DialogButtons>
      </Dialog>
      <Badge $x={747} $y={395}>3</Badge>
    </Window>
  );
}
